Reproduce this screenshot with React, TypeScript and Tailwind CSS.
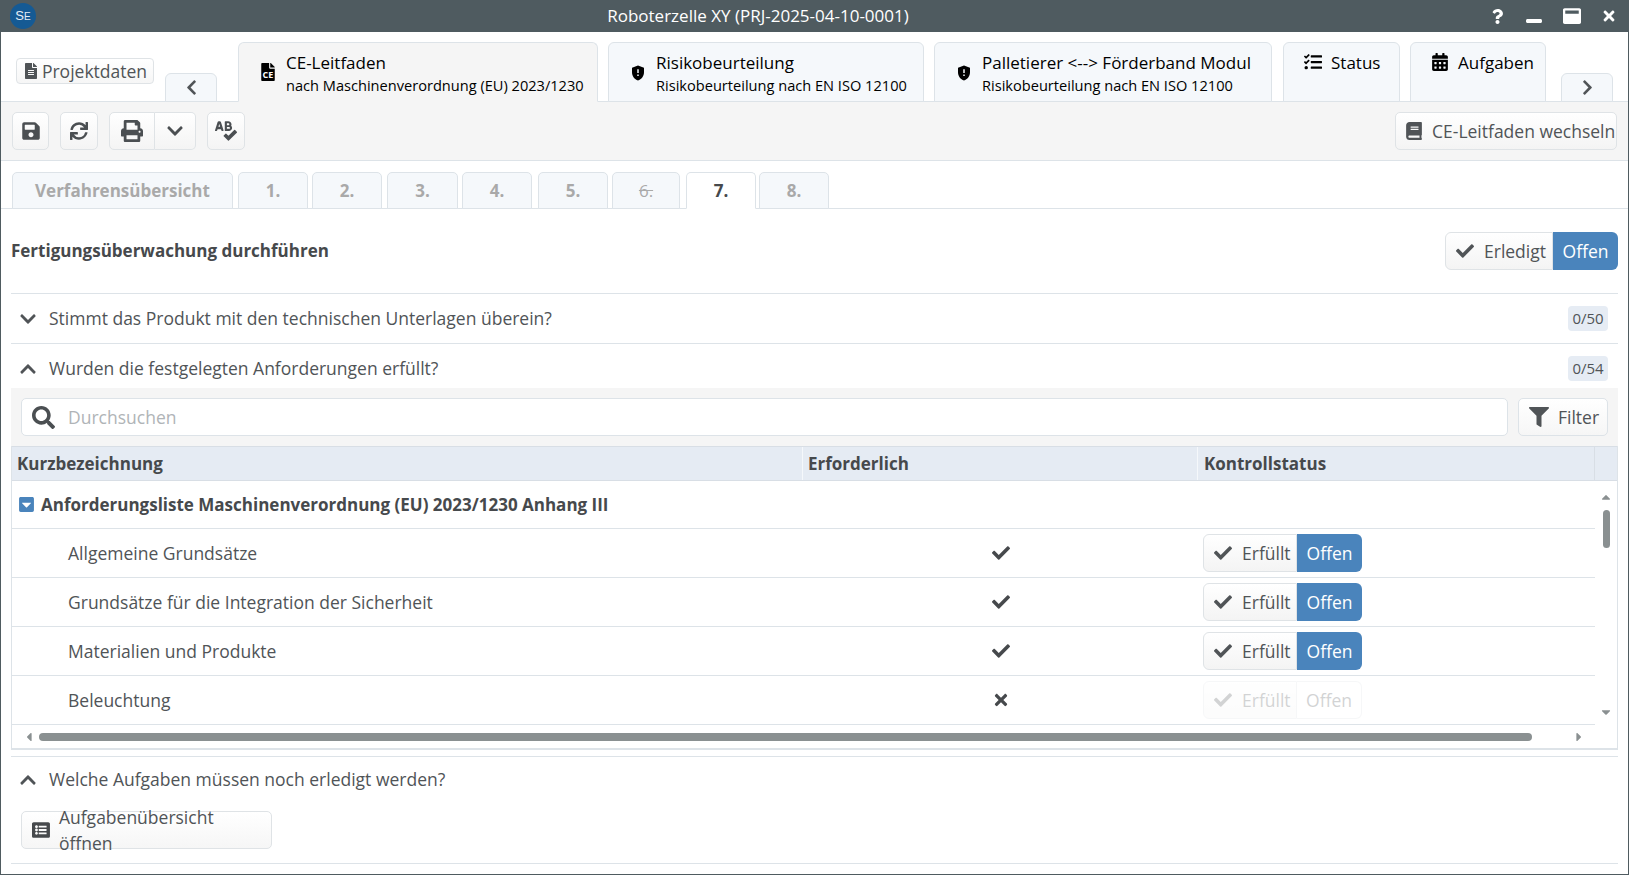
import React from 'react';
import { FaSave, FaSync, FaPrint, FaChevronDown, FaChevronUp, FaChevronLeft, FaChevronRight, FaSpellCheck, FaTasks, FaCalendarAlt, FaFilter, FaSearch, FaCheck, FaTimes, FaListAlt, FaFile, FaCaretSquareDown, FaQuestion, FaWindowMinimize, FaWindowMaximize, FaFileAlt, FaBook, FaCaretUp, FaCaretDown, FaCaretLeft, FaCaretRight } from 'react-icons/fa';
import { MdGppMaybe } from 'react-icons/md';

const TXT = 'text-[#505457]';

function TopTab({ w, ml, icon, title, sub, active }: { w: string; ml: string; icon: React.ReactNode; title: string; sub?: string; active?: boolean }) {
  return (
    <div className={`${w} ${ml} ${active ? 'bg-[#f5f5f5] border-b-[#f5f5f5]' : 'bg-[#f5f8fb] border-b-[#dde3e8]'} h-[60px] -mb-px relative rounded-t-[6px] border border-[#dde3e8] flex items-start pl-[20px] text-black shrink-0`}>
      <div className={`w-[18px] ${sub ? 'mt-[20px]' : 'mt-[10px]'} flex justify-center text-[20px] shrink-0`}>{icon}</div>
      <div className="ml-[9px] mt-[8px]">
        <div className="text-[17px] leading-[24px] whitespace-nowrap">{title}</div>
        {sub && <div className="text-[14.6px] leading-[20px] whitespace-nowrap">{sub}</div>}
      </div>
    </div>
  );
}

function ArrowTab({ ml, w, children }: { ml: string; w: string; children: React.ReactNode }) {
  return (
    <div className={`${ml} ${w} h-[29px] -mb-px relative bg-[#f5f8fb] border border-[#dde3e8] rounded-t-[6px] flex items-center justify-center text-[#505457] text-[17px] shrink-0`}>{children}</div>
  );
}

function ToolBtn({ w, ml, children }: { w: string; ml?: string; children: React.ReactNode }) {
  return (
    <div className={`${w} ${ml ?? ''} h-[38px] bg-gradient-to-b from-white to-[#f4f4f4] border border-[#dfe3e6] rounded-[5px] flex items-center justify-center text-[#4b4f52] text-[20px] shrink-0`}>{children}</div>
  );
}

function StepTab({ w, ml, label, active, strike }: { w: string; ml: string; label: string; active?: boolean; strike?: boolean }) {
  return (
    <div className={`${w} ${ml} h-[37px] -mb-px relative rounded-t-[5px] border border-[#dde3e8] flex items-center justify-center text-[17px] shrink-0 ${active ? 'bg-white border-b-white text-[#46494c] font-bold' : strike ? 'bg-[#f5f8fb] text-[#aaaaaa] line-through font-normal' : 'bg-[#f5f8fb] text-[#a9a9a9] font-bold'}`}>{label}</div>
  );
}

function Toggle({ w, split, label, disabled }: { w: string; split: string; label: string; disabled?: boolean }) {
  return (
    <div className={`${w} h-[38px] flex text-[17.5px] shrink-0 ${disabled ? 'opacity-25' : ''}`}>
      <div className={`${split} h-full border border-[#dfe3e6] rounded-l-[6px] bg-gradient-to-b from-white to-[#f4f4f4] flex items-center pl-[10px] ${TXT}`}>
        <FaCheck className="text-[18px] shrink-0" />
        <span className="ml-[10px]">{label}</span>
      </div>
      <div className={`flex-1 h-full rounded-r-[6px] flex items-center justify-center ${disabled ? 'border border-l-0 border-[#dfe3e6] text-[#505457]' : 'bg-[#4a84bc] text-white'}`}>Offen</div>
    </div>
  );
}

function AccRow({ open, label, badge }: { open?: boolean; label: string; badge?: string }) {
  return (
    <div className={`h-[50px] flex items-center border-t border-[#dde3e8] ${TXT} text-[17.5px]`}>
      <div className="w-[38px] pl-[8px] text-[18px]">{open ? <FaChevronUp /> : <FaChevronDown />}</div>
      <span>{label}</span>
      {badge && <span className="ml-auto mr-[10px] h-[25px] w-[40px] rounded-[4px] bg-[#e6ecf4] text-[15px] flex items-center justify-center">{badge}</span>}
    </div>
  );
}

function Row({ label, ok }: { label: string; ok: boolean }) {
  return (
    <div className={`h-[49px] shrink-0 flex items-center border-b border-[#dde3e8] ${TXT} text-[17.5px]`}>
      <div className="w-[791px] pl-[56px]">{label}</div>
      <div className="w-[395px] flex justify-center text-[#46494c] text-[18px] pr-[0px]">{ok ? <FaCheck /> : <FaTimes />}</div>
      <div className="pl-[5px]"><Toggle w="w-[159px]" split="w-[94px]" label="Erfüllt" disabled={!ok} /></div>
    </div>
  );
}

export default function App() {
  return (
    <div className="w-[1629px] h-[875px] overflow-hidden flex flex-col bg-white border-x border-b border-[#4f5b60] font-['Open_Sans',sans-serif]">
      {/* title bar */}
      <div className="h-[32px] -mx-px shrink-0 bg-[#4f5b60] flex items-center text-white relative">
        <div className="ml-[10px] w-[26px] h-[26px] rounded-full bg-[#155a94] flex items-center justify-center text-[13px] font-['Liberation_Sans',sans-serif] text-[#e6eef5]">S<span className="text-[10px]">E</span></div>
        <div className="flex-1 text-center text-[17px] text-white pr-[10px]">Roboterzelle XY (PRJ-2025-04-10-0001)</div>
        <div className="flex items-center text-[16px] mr-[12px]">
          <FaQuestion className="text-[15px]" />
          <FaWindowMinimize className="ml-[21px] text-[16px]" />
          <FaWindowMaximize className="ml-[21px] text-[18px]" />
          <FaTimes className="ml-[20px] text-[16px]" />
        </div>
      </div>

      {/* top tabs */}
      <div className="h-[70px] shrink-0 flex items-end border-b border-[#dde3e8]">
        <div className={`ml-[15px] w-[138px] h-[26px] mb-[17px] rounded-[4px] border border-[#dfe3e6] bg-gradient-to-b from-white to-[#f6f6f6] flex items-center justify-center text-[17.5px] ${TXT} shrink-0`}>
          <FaFileAlt className="text-[16px] mr-[3px]" />Projektdaten
        </div>
        <ArrowTab ml="ml-[11px]" w="w-[52px]"><FaChevronLeft /></ArrowTab>
        <TopTab w="w-[360px]" ml="ml-[21px]" active title="CE-Leitfaden" sub="nach Maschinenverordnung (EU) 2023/1230"
          icon={<span className="relative inline-block"><FaFile className="text-[18px]" /><span className="absolute left-0 right-0 bottom-[1px] text-center text-[9px] leading-[10px] font-bold text-white">CE</span></span>} />
        <TopTab w="w-[316px]" ml="ml-[10px]" title="Risikobeurteilung" sub="Risikobeurteilung nach EN ISO 12100" icon={<MdGppMaybe />} />
        <TopTab w="w-[338px]" ml="ml-[10px]" title="Palletierer <--> Förderband Modul" sub="Risikobeurteilung nach EN ISO 12100" icon={<MdGppMaybe />} />
        <TopTab w="w-[117px]" ml="ml-[11px]" title="Status" icon={<FaTasks className="text-[18px]" />} />
        <TopTab w="w-[136px]" ml="ml-[10px]" title="Aufgaben" icon={<FaCalendarAlt className="text-[18px]" />} />
        <ArrowTab ml="ml-[15px]" w="w-[52px]"><FaChevronRight /></ArrowTab>
      </div>

      {/* toolbar */}
      <div className="h-[59px] shrink-0 bg-[#f5f5f5] border-b border-[#dde3e8] flex items-center">
        <ToolBtn w="w-[37px]" ml="ml-[11px]"><FaSave /></ToolBtn>
        <ToolBtn w="w-[38px]" ml="ml-[11px]"><FaSync className="text-[18px]" /></ToolBtn>
        <div className="ml-[11px] flex">
          <div className="w-[46px] h-[38px] rounded-l-[5px] border border-[#dfe3e6] bg-gradient-to-b from-white to-[#f4f4f4] flex items-center justify-center text-[#4b4f52] text-[22px]"><FaPrint /></div>
          <div className="w-[41px] h-[38px] rounded-r-[5px] border border-l-0 border-[#dfe3e6] bg-gradient-to-b from-white to-[#f4f4f4] flex items-center justify-center text-[#4b4f52] text-[18px]"><FaChevronDown /></div>
        </div>
        <ToolBtn w="w-[38px]" ml="ml-[11px]"><FaSpellCheck className="text-[22px]" /></ToolBtn>
        <div className={`ml-auto mr-[11px] w-[222px] h-[38px] rounded-[5px] border border-[#dfe3e6] bg-gradient-to-b from-white to-[#f4f4f4] flex items-center pl-[9px] text-[17.5px] ${TXT}`}>
          <FaBook className="text-[18px] mr-[9px]" />CE-Leitfaden wechseln
        </div>
      </div>

      {/* step tabs */}
      <div className="h-[48px] shrink-0 flex items-end border-b border-[#dde3e8]">
        <StepTab w="w-[221px]" ml="ml-[11px]" label="Verfahrensübersicht" />
        <StepTab w="w-[70px]" ml="ml-[5px]" label="1." />
        <StepTab w="w-[70px]" ml="ml-[4px]" label="2." />
        <StepTab w="w-[71px]" ml="ml-[5px]" label="3." />
        <StepTab w="w-[70px]" ml="ml-[4px]" label="4." />
        <StepTab w="w-[70px]" ml="ml-[6px]" label="5." />
        <StepTab w="w-[68px]" ml="ml-[4px]" label="6." strike />
        <StepTab w="w-[70px]" ml="ml-[6px]" label="7." active />
        <StepTab w="w-[70px]" ml="ml-[3px]" label="8." />
      </div>

      {/* content */}
      <div className="flex-1 min-h-0 flex flex-col pl-[10px] pr-[10px]">
        <div className="h-[84px] shrink-0 flex items-center justify-between">
          <div className={`font-bold text-[17px] text-[#46494c]`}>Fertigungsüberwachung durchführen</div>
          <Toggle w="w-[173px]" split="w-[108px]" label="Erledigt" />
        </div>
        <AccRow label="Stimmt das Produkt mit den technischen Unterlagen überein?" badge="0/50" />
        <AccRow open label="Wurden die festgelegten Anforderungen erfüllt?" badge="0/54" />

        {/* search */}
        <div className="h-[58px] shrink-0 bg-[#f5f5f5] flex items-center pl-[10px] pr-[10px] -mt-[5px]">
          <div className={`flex-1 h-[38px] bg-white border border-[#dde3e8] rounded-[5px] flex items-center pl-[10px] text-[17.5px] text-[#b0b4b7]`}>
            <FaSearch className="text-[#4b4f52] text-[23px] mr-[13px]" />Durchsuchen
          </div>
          <div className={`ml-[10px] w-[90px] h-[38px] border border-[#dde3e8] rounded-[5px] bg-gradient-to-b from-white to-[#f6f6f6] flex items-center pl-[10px] text-[17.5px] ${TXT}`}>
            <FaFilter className="text-[20px] mr-[9px]" />Filter
          </div>
        </div>

        {/* table */}
        <div className="h-[304px] shrink-0 border-x border-b-2 border-[#dde3e8] flex flex-col">
          <div className="h-[35px] shrink-0 bg-[#e5ebf3] border-y border-[#d8dee5] flex items-center font-bold text-[17px] text-[#46494c]">
            <div className="w-[791px] pl-[5px] border-r border-[#f5f8fb] h-full flex items-center">Kurzbezeichnung</div>
            <div className="w-[395px] pl-[5px] border-r border-[#f5f8fb] h-full flex items-center">Erforderlich</div>
            <div className="w-[397px] pl-[6px] border-r border-[#d8dee5] h-full flex items-center">Kontrollstatus</div>
          </div>
          <div className="flex-1 min-h-0 flex">
            <div className="w-[1583px] shrink-0 flex flex-col">
              <div className="h-[48px] shrink-0 flex items-center border-b border-[#dde3e8] font-bold text-[17px] text-[#46494c] pl-[6px]">
                <FaCaretSquareDown className="text-[#4a84bc] text-[17px] mr-[6px]" />Anforderungsliste Maschinenverordnung (EU) 2023/1230 Anhang III
              </div>
              <Row label="Allgemeine Grundsätze" ok />
              <Row label="Grundsätze für die Integration der Sicherheit" ok />
              <Row label="Materialien und Produkte" ok />
              <Row label="Beleuchtung" ok={false} />
              <div className="flex-1 flex items-center text-[#8a9091] text-[14px]">
                <FaCaretLeft className="ml-[10px]" />
                <div className="ml-[3px] w-[1493px] h-[8px] rounded-full bg-[#8a9091]" />
                <FaCaretRight className="ml-[40px]" />
              </div>
            </div>
            <div className="flex-1 flex flex-col items-center text-[#8a9091] pt-[9px]">
              <FaCaretUp className="text-[14px]" />
              <div className="mt-[6px] w-[7px] h-[38px] rounded-full bg-[#8a9091]" />
              <FaCaretDown className="text-[14px] mt-[157px]" />
            </div>
          </div>
        </div>

        <div className="mt-[6px] border-t border-[#dde3e8] h-[108px] shrink-0 border-b flex flex-col">
          <div className={`h-[45px] flex items-center ${TXT} text-[17.5px]`}>
            <div className="w-[38px] pl-[8px] text-[18px]"><FaChevronUp /></div>
            <span>Welche Aufgaben müssen noch erledigt werden?</span>
          </div>
          <div className={`ml-[10px] mt-[9px] w-[251px] h-[38px] rounded-[5px] border border-[#dfe3e6] bg-gradient-to-b from-white to-[#f6f6f6] flex items-center pl-[10px] text-[17.5px] ${TXT}`}>
            <FaListAlt className="text-[18px] mr-[9px] text-[#46494c]" />Aufgabenübersicht öffnen
          </div>
        </div>
      </div>
    </div>
  );
}
